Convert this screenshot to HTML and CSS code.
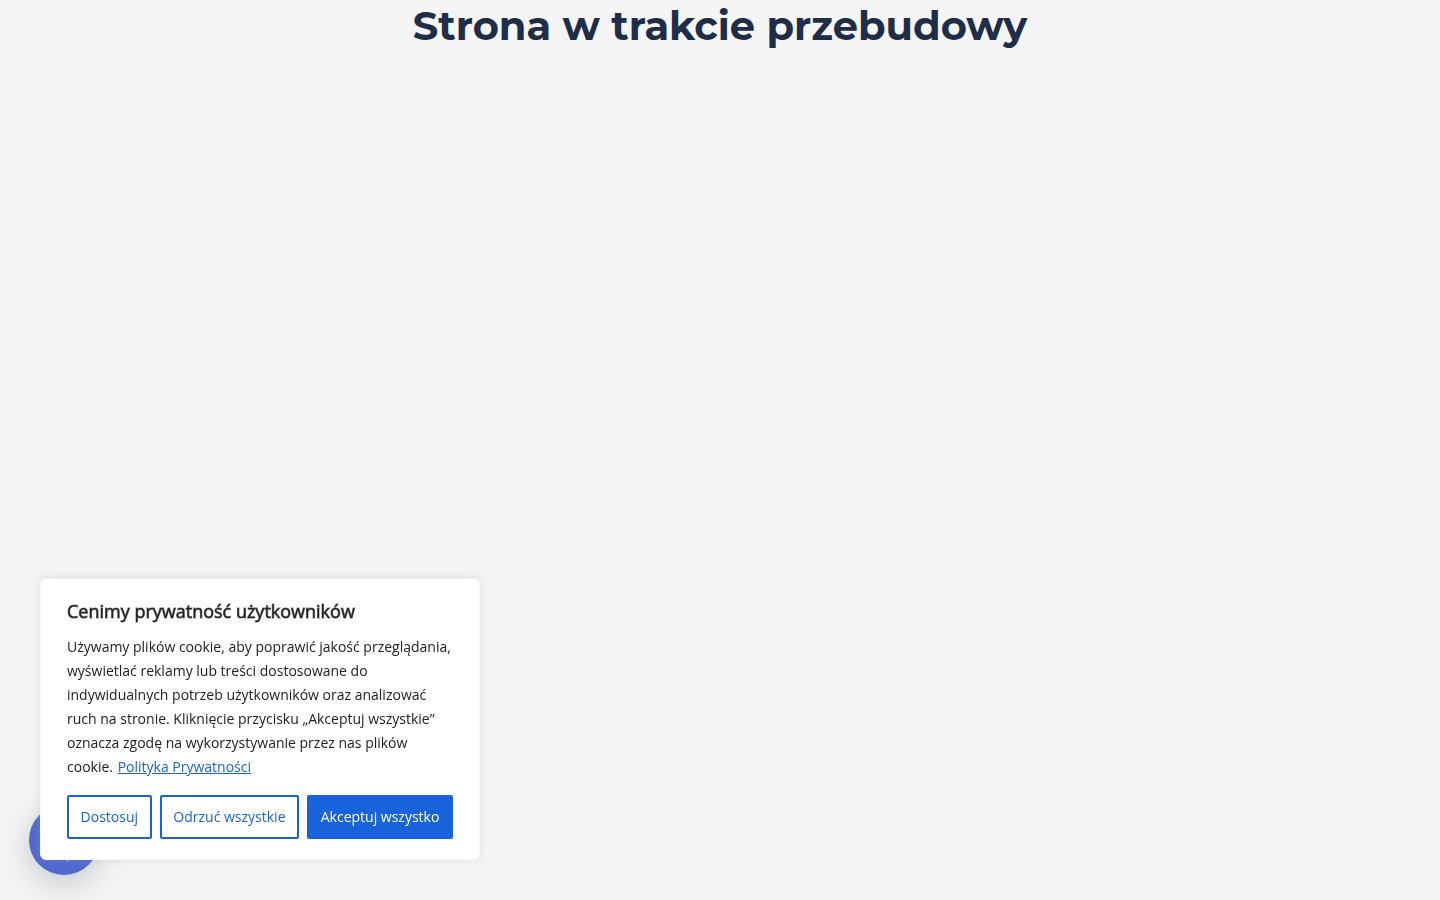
FILE: index.html
```
<!DOCTYPE html>
<html lang="pl">
<head>
  <meta charset="UTF-8">
  <meta name="viewport" content="width=device-width, initial-scale=1">
  <title>Strona w trakcie przebudowy</title>
  <link rel="stylesheet" href="styles.css">
</head>
<body>

<main>
  <h1>Strona w trakcie przebudowy</h1>
</main>

<div class="chat">
  <button class="chat-btn" type="button" aria-label="Czat">
    <svg viewBox="0 0 40 42" width="40" height="42" aria-hidden="true">
      <path d="M10 4h20a6 6 0 0 1 6 6v16a6 6 0 0 1-6 6h-1l-4 9q-2 1-3 0l-6-9h-6a6 6 0 0 1-6-6V10a6 6 0 0 1 6-6z" fill="#fff"/>
    </svg>
  </button>
</div>

<div class="cookie-box" role="dialog" aria-labelledby="cookie-title">
  <h2 id="cookie-title">Cenimy prywatność użytkowników</h2>
  <p>Używamy plików cookie, aby poprawić jakość przeglądania, wyświetlać reklamy lub treści dostosowane do indywidualnych potrzeb użytkowników oraz analizować ruch na stronie. Kliknięcie przycisku „Akceptuj wszystkie” oznacza zgodę na wykorzystywanie przez nas plików cookie. <a href="#">Polityka Prywatności</a></p>
  <div class="cookie-buttons">
    <button class="btn" type="button">Dostosuj</button>
    <button class="btn" type="button">Odrzuć wszystkie</button>
    <button class="btn btn-accept" type="button">Akceptuj wszystko</button>
  </div>
</div>

</body>
</html>
```
FILE: styles.css
```
* {
  box-sizing: border-box;
}
body {
  margin: 0;
  background: #f5f5f5;
  font-family: "Open Sans", sans-serif;
  color: #212121;
}
h1 {
  margin: 0;
  font-family: Montserrat, Inter, sans-serif;
  font-size: 40px;
  line-height: 52px;
  font-weight: 700;
  text-align: center;
  color: #1f2e48;
}

/* chat */
.chat {
  position: fixed;
  left: 29px;
  bottom: 25px;
}
.chat-btn {
  display: flex;
  align-items: center;
  justify-content: center;
  width: 70px;
  height: 70px;
  padding: 0;
  border: none;
  border-radius: 50%;
  background: #5069cf;
  box-shadow: 0 8px 32px rgba(15, 50, 80, 0.24);
  cursor: pointer;
}

/* cookies */
.cookie-box {
  position: fixed;
  left: 40px;
  bottom: 40px;
  width: 440px;
  max-width: calc(100% - 80px);
  padding: 20px 26px;
  border: 1px solid #f4f4f4;
  border-radius: 6px;
  background: #fff;
  box-shadow: 0 -1px 10px rgba(172, 171, 171, 0.3);
}
.cookie-box h2 {
  margin: 0 0 12px;
  font-size: 18px;
  line-height: 24px;
  font-weight: 400;
  -webkit-text-stroke: 1px rgba(33, 33, 33, 0.6);
}
.cookie-box p {
  margin: 0 0 16px;
  font-size: 14px;
  line-height: 24px;
}
.cookie-box a {
  margin-left: 1px;
  color: #1863dc;
  text-decoration: underline;
}
.cookie-buttons {
  display: flex;
  gap: 8px;
}
.btn {
  flex: auto;
  height: 44px;
  padding: 0 11px;
  border: 2px solid #1863dc;
  border-radius: 2px;
  background: transparent;
  font-family: inherit;
  font-size: 14px;
  line-height: 24px;
  color: #1863dc;
  white-space: nowrap;
  cursor: pointer;
}
.btn-accept {
  background: #1863dc;
  color: #fff;
}
```
